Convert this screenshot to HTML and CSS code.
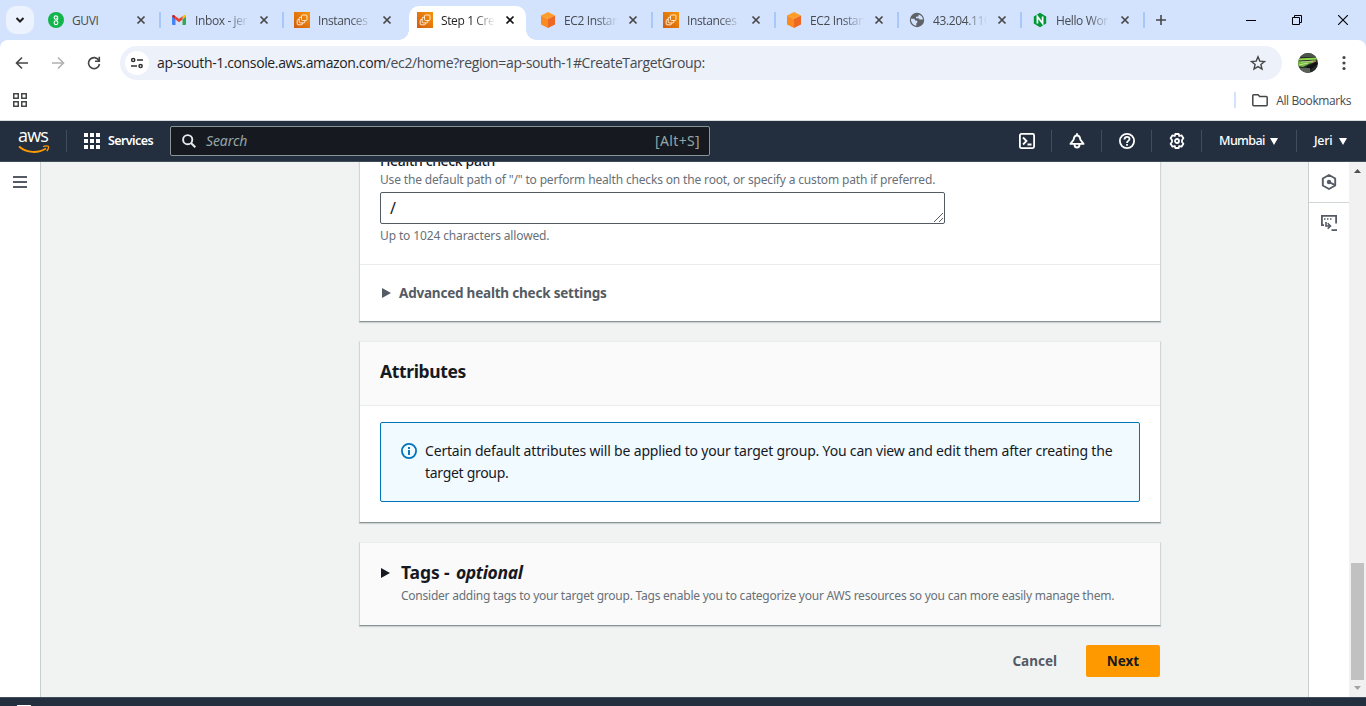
FILE: index.html
```
<!DOCTYPE html>
<html lang="en">
<head>
<meta charset="utf-8">
<title>Step 1 Create target group</title>
<link rel="stylesheet" href="styles.css">
</head>
<body>
<svg class="defs" width="0" height="0">
  <defs>
    <linearGradient id="orange" x1="0" y1="1" x2="1" y2="0"><stop offset="0" stop-color="#d05c10"/><stop offset="1" stop-color="#f79408"/></linearGradient>
    <symbol id="ec2" viewBox="0 0 16 16"><rect width="16" height="16" fill="url(#orange)"/><g fill="none" stroke="#ffe9cf" stroke-width="1"><rect x="7.500" y="3" width="5.500" height="5.500" rx="1"/><path d="M7.500 5.300H6q-.8 0-.8.800v4q0 .8.800.8h4q.8 0 .8-.8V8.500"/><path d="M5.200 7.600H4q-.8 0-.8.800V12q0 .8.800.8h3.600q.8 0 .8-.8v-1.100"/></g></symbol>
    <symbol id="cube" viewBox="0 0 16 16"><path d="M8 0l7 3.500L8 7 1 3.500z" fill="#ff9d2b"/><path d="M1 3.500L8 7v9l-7-3.500z" fill="#f98b20"/><path d="M15 3.500L8 7v9l7-3.500z" fill="#ee6723"/></symbol>
    <symbol id="close" viewBox="0 0 10 10"><path d="M1.500 1.500l7 7M8.500 1.500l-7 7" stroke="currentColor" stroke-width="1.700" fill="none"/></symbol>
  </defs>
</svg>

<header class="tabstrip">
  <div class="tab-search"><svg width="10" height="8" viewBox="0 0 10 8"><path d="M1.500 2L5 5.500 8.500 2" fill="none" stroke="#1f1f1f" stroke-width="2"/></svg></div>
  <div class="tab"><svg class="fav" viewBox="0 0 16 16"><circle cx="8" cy="8" r="8" fill="#12b54a"/><g fill="none" stroke="#fff" stroke-width="1.100"><circle cx="7.800" cy="5.600" r="1.700"/><path d="M9.600 3.900V7.500Q9.400 8.500 8 8.600"/><ellipse cx="8" cy="10.700" rx="1.900" ry="1.900"/></g></svg><span class="title t-guvi">GUVI</span><svg class="x"><use href="#close"/></svg></div>
  <div class="tab"><svg class="fav" viewBox="0 0 16 16"><path d="M1 4.500l3.500 2.600V13H2a1 1 0 0 1-1-1z" fill="#4285f4"/><path d="M15 4.500l-3.500 2.600V13H14a1 1 0 0 0 1-1z" fill="#34a853"/><path d="M11.500 4.200l1.200-.9C13.700 2.600 15 3.200 15 4.500l-3.500 3z" fill="#fbbc04"/><path d="M4.500 4.200L8 6.800l3.500-2.600v3.300L8 10.200 4.500 7.500z" fill="#ea4335"/><path d="M1 4.500c0-1.300 1.300-1.900 2.300-1.200l1.200.9v3.300z" fill="#c5221f"/></svg><span class="title">Inbox - jer</span><svg class="x"><use href="#close"/></svg></div>
  <div class="tab no-sep"><svg class="fav"><use href="#ec2"/></svg><span class="title">Instances</span><svg class="x"><use href="#close"/></svg></div>
  <div class="tab active"><svg class="fav"><use href="#ec2"/></svg><span class="title">Step 1 Cre</span><svg class="x"><use href="#close"/></svg></div>
  <div class="tab"><svg class="fav"><use href="#cube"/></svg><span class="title">EC2 Instan</span><svg class="x"><use href="#close"/></svg></div>
  <div class="tab"><svg class="fav"><use href="#ec2"/></svg><span class="title">Instances</span><svg class="x"><use href="#close"/></svg></div>
  <div class="tab"><svg class="fav"><use href="#cube"/></svg><span class="title">EC2 Instan</span><svg class="x"><use href="#close"/></svg></div>
  <div class="tab"><svg class="fav" viewBox="0 0 16 16"><circle cx="8" cy="8" r="7.200" fill="#5f6368"/><path d="M2 6.800h2.500c1.200 0 1.500.7 1.500 1.700h1.200c.9 0 1.300.8 1.100 1.700-.2.700-1 .8-1 1.500v2C4.200 13.500 1.700 10.500 2 6.800zM9.600 2.400v1.200c0 .8-.6 1.200-1.400 1.200H7v1.400h2.300c1 0 .9 1.400 1.900 1.400h2.700C13.900 5 12 2.900 9.600 2.400z" fill="#d3e3fd"/></svg><span class="title">43.204.110</span><svg class="x"><use href="#close"/></svg></div>
  <div class="tab"><svg class="fav" viewBox="0 0 16 16"><path d="M8 .8l6.200 3.600v7.200L8 15.200l-6.200-3.600V4.400z" fill="#009639"/><path d="M5.400 11.500v-7l5.200 7v-7" fill="none" stroke="#fff" stroke-width="1.700"/></svg><span class="title">Hello Wor</span><svg class="x"><use href="#close"/></svg></div>
  <svg class="new-tab" width="12" height="12" viewBox="0 0 12 12"><path d="M6 1v10M1 6h10" stroke="#444746" stroke-width="1.600"/></svg>
  <div class="window-controls">
    <svg width="10" height="10" viewBox="0 0 10 10"><path d="M0 5.500h10" stroke="#000"/></svg>
    <svg width="10" height="10" viewBox="0 0 10 10"><path d="M.5 2.500h7v7h-7zM2.500 2.500v-2h7v7h-2" fill="none" stroke="#000"/></svg>
    <svg width="10" height="10" viewBox="0 0 10 10"><path d="M0 0l10 10M10 0L0 10" stroke="#000" stroke-width="1.100"/></svg>
  </div>
</header>

<div class="chrome">
  <div class="toolbar">
    <div class="nav-icons">
      <svg width="14" height="14" viewBox="0 0 14 14"><path d="M13 7H2M7 1.500L1.500 7 7 12.500" fill="none" stroke="#444746" stroke-width="1.600"/></svg>
      <svg width="14" height="14" viewBox="0 0 14 14"><path d="M1 7h11M7 1.500L12.500 7 7 12.500" fill="none" stroke="#b0b1b1" stroke-width="1.600"/></svg>
      <svg width="14" height="14" viewBox="0 0 14 14"><path d="M11.800 4.300A5.500 5.500 0 1 0 12.500 8M12.300.8v4.400H8" fill="none" stroke="#444746" stroke-width="1.600"/></svg>
    </div>
    <div class="omnibox">
      <div class="site-info"><svg width="14" height="14" viewBox="0 0 14 14"><g fill="none" stroke="#303134" stroke-width="1.500"><circle cx="3.200" cy="4" r="1.600"/><path d="M7 4h6M1 10h6"/><circle cx="10.600" cy="10" r="1.600"/></g></svg></div>
      <span class="url">ap-south-1.console.aws.amazon.com<span class="path">/ec2/home?region=ap-south-1#CreateTargetGroup:</span></span>
      <svg class="star" width="16" height="16" viewBox="0 0 16 16"><path d="M8 1.800l1.800 4.300 4.700.4-3.600 3 1.100 4.600L8 11.600l-4 2.500 1.100-4.600-3.600-3 4.700-.4z" fill="none" stroke="#444746" stroke-width="1.400"/></svg>
    </div>
    <svg class="avatar" width="20" height="20" viewBox="0 0 20 20"><defs><clipPath id="av"><circle cx="10" cy="10" r="10"/></clipPath></defs><g clip-path="url(#av)"><rect width="20" height="20" fill="#272b29"/><path d="M0 0h20v4H0z" fill="#4a5548"/><path d="M0 5.500l20-1v2L0 7.500z" fill="#8ed84c"/><path d="M0 8l9 1 8-2 1 1-7 3-6 3-5-1z" fill="#75b843"/><path d="M1 12l9-2M3 9l12-1" stroke="#d5efa8" stroke-width=".8"/><path d="M8 14l10-5 2 2-8 6z" fill="#101315"/><path d="M0 15h12v5H0z" fill="#5b625a"/><path d="M13 10l5-2" stroke="#c27d52"/></g></svg>
    <svg class="kebab" width="4" height="16" viewBox="0 0 4 16"><g fill="#444746"><circle cx="2" cy="2.500" r="1.600"/><circle cx="2" cy="8" r="1.600"/><circle cx="2" cy="13.500" r="1.600"/></g></svg>
  </div>
  <div class="bookmarks">
    <svg width="14" height="14" viewBox="0 0 14 14"><path d="M.75.75h4.500v4.500H.75zM8.750.75h4.500v4.500h-4.500zM.75 8.750h4.500v4.500H.75zM8.750 8.750h4.500v4.500h-4.500z" fill="none" stroke="#444746" stroke-width="1.500"/></svg>
    <div class="all-bookmarks"><svg width="16" height="13" viewBox="0 0 16 13"><path d="M.8 10.800V1.800Q.8.800 1.800.8H6l1.700 1.800h6.500q1 0 1 1v7.200q0 1-1 1H1.800q-1 0-1-1z" fill="none" stroke="#444746" stroke-width="1.500"/></svg><span>All Bookmarks</span></div>
  </div>
</div>

<nav class="aws-nav">
  <div class="logo"><span>aws</span><svg width="32" height="9" viewBox="0 0 32 9"><path d="M1 1.500C9 8.300 20 8.500 28 3.500" fill="none" stroke="#ff9900" stroke-width="1.900"/><path d="M25 1.500c2.500-.8 4.500-.8 5.300-.2.600.8-.2 3-1.500 4.900" fill="none" stroke="#ff9900" stroke-width="1.300"/></svg></div>
  <div class="services"><svg width="16" height="16" viewBox="0 0 16 16"><path d="M0 0h4v4H0zM6 0h4v4H6zM12 0h4v4h-4zM0 6h4v4H0zM6 6h4v4H6zM12 6h4v4h-4zM0 12h4v4H0zM6 12h4v4H6zM12 12h4v4h-4z" fill="#fff"/></svg><span>Services</span></div>
  <div class="search"><svg width="14" height="14" viewBox="0 0 14 14"><circle cx="5.700" cy="5.700" r="4.600" fill="none" stroke="#e9ebed" stroke-width="1.900"/><path d="M9 9l4.300 4.300" stroke="#e9ebed" stroke-width="2"/></svg><em>Search</em><span class="key">[Alt+S]</span></div>
  <div class="tools">
    <div class="tool"><svg width="16" height="16" viewBox="0 0 16 16"><g fill="none" stroke="#fff" stroke-width="1.800"><rect x=".9" y=".9" width="14.200" height="14.200" rx="1.500"/><path d="M4 4.500L7.500 8 4 11.500M8.500 11.500h4"/></g></svg></div>
    <div class="tool"><svg width="16" height="16" viewBox="0 0 16 16"><g fill="none" stroke="#fff" stroke-width="1.900"><path d="M8 2.500C5.500 2.500 4.900 4.500 4.700 6.500L1.500 10.900h13L11.300 6.500C11.100 4.500 10.500 2.500 8 2.500zM8 .3v2M5.500 11.500c0 4 5 4 5 0" stroke-linejoin="round"/></g></svg></div>
    <div class="tool"><svg width="16" height="16" viewBox="0 0 16 16"><g fill="none" stroke="#fff" stroke-width="1.800"><circle cx="8" cy="8" r="7.100"/><path d="M5.500 6.500C5.500 3 10.500 3 10.500 6 10.500 8 8 7.800 8 10" /><path d="M8 11v1.800"/></g></svg></div>
    <div class="tool"><svg width="16" height="16" viewBox="0 0 16 16"><g fill="none" stroke="#fff" stroke-width="1.800" stroke-linejoin="round"><path d="M6.300 1h3.400l.5 2 2.300-.7 1.900 3L13 7v2l1.400 1.700-1.900 3-2.300-.7-.5 2H6.300l-.5-2-2.300.7-1.900-3L3 9V7L1.600 5.300l1.900-3 2.300.7z"/><circle cx="8" cy="8" r="2"/></g></svg></div>
    <div class="menu mumbai"><span>Mumbai</span><svg width="8" height="7" viewBox="0 0 8 7"><path d="M0 0h8L4 7z" fill="#fff"/></svg></div>
    <div class="menu jeri"><span>Jeri</span><svg width="8" height="7" viewBox="0 0 8 7"><path d="M0 0h8L4 7z" fill="#fff"/></svg></div>
  </div>
</nav>

<div class="workspace">
  <aside class="left-rail"><svg width="14" height="12" viewBox="0 0 14 12"><path d="M0 1h14M0 6h14M0 11h14" stroke="#545b64" stroke-width="2"/></svg></aside>
  <main class="content">
    <section class="card health">
      <div class="fields">
        <div class="label">Health check path</div>
        <div class="hint h1">Use the default path of "/" to perform health checks on the root, or specify a custom path if preferred.</div>
        <div class="textarea"><span>/</span><svg width="9" height="9" viewBox="0 0 9 9"><path d="M0 9L9 0M5 9l4-4" stroke="#545b64" stroke-width="1"/></svg></div>
        <div class="hint h2">Up to 1024 characters allowed.</div>
      </div>
      <div class="advanced"><svg width="9" height="10" viewBox="0 0 9 10"><path d="M0 0l9 5-9 5z" fill="#545b64"/></svg><span>Advanced health check settings</span></div>
    </section>
    <section class="card attributes">
      <h2>Attributes</h2>
      <div class="alert"><svg width="16" height="16" viewBox="0 0 16 16"><circle cx="8" cy="8" r="7.100" fill="none" stroke="#0073bb" stroke-width="1.800"/><path d="M8 7v5M8 4v2" stroke="#0073bb" stroke-width="1.900"/></svg><p><span class="a1">Certain default attributes will be applied to your target group. You can view and edit them after creating the</span><br><span class="a2">target group.</span></p></div>
    </section>
    <section class="card tags">
      <svg width="9" height="10" viewBox="0 0 9 10"><path d="M0 0l9 5-9 5z" fill="#16191f"/></svg>
      <div><h2>Tags - <em>optional</em></h2><p class="tags-desc">Consider adding tags to your target group. Tags enable you to categorize your AWS resources so you can more easily manage them.</p></div>
    </section>
    <div class="actions"><span class="cancel">Cancel</span><span class="next">Next</span></div>
  </main>
  <aside class="right-rail">
    <div class="rail-item"><svg width="16" height="16" viewBox="0 0 16 16"><g fill="none" stroke="#545b64" stroke-width="1.900"><path d="M8 1l6.200 3.500v7L8 15l-6.200-3.500v-7z" stroke-linejoin="round"/><path d="M8 8l6 3.200"/></g><circle cx="8" cy="8" r="2.200" fill="#545b64"/></svg></div>
    <div class="rail-item terminal"><svg width="16" height="16" viewBox="0 0 16 16"><g fill="none" stroke="#545b64" stroke-width="1.800"><path d="M3 10.100H.9V.9h14.200V8.500"/><path d="M3 4h1.500M6 4h1.500M9 4h1.500M5 7v4M4.100 11h5M6.700 8.200L9.500 11l-2.800 2.800M10.500 15.100H16" stroke-width="1.600"/></g></svg></div>
  </aside>
  <div class="scrollbar"><svg width="7" height="4" viewBox="0 0 7 4"><path d="M0 4l3.500-4L7 4z" fill="#505050"/></svg><div class="thumb"></div><svg width="7" height="4" viewBox="0 0 7 4"><path d="M0 0l3.500 4L7 0z" fill="#a3a3a3"/></svg></div>
</div>
<footer class="footer"><div class="footer-icon"></div></footer>
</body>
</html>
```
FILE: styles.css
```
* { box-sizing: border-box; }
body { margin: 0; width: 1366px; height: 706px; overflow: hidden; display: flex; flex-direction: column; background: #fff; color: #16191f; font-family: "Noto Sans", sans-serif; font-size: 14px; }
svg { display: block; flex: none; }
h2, p { margin: 0; }
span { white-space: nowrap; }
.defs { position: absolute; }

.tabstrip { height: 40px; flex: none; display: flex; background: #d3e3fd; font-family: "Open Sans", sans-serif; }
.tab-search { width: 28px; height: 28px; margin: 6px 6px 0; border-radius: 10px; background: #ecf2fe; display: flex; align-items: center; justify-content: center; }
.tab { width: 123px; flex: none; height: 40px; padding: 0 0 0 8px; display: flex; align-items: center; position: relative; color: #474a50; }
.tab::after { content: ""; position: absolute; right: 2px; top: 12px; width: 2px; height: 16px; background: #a8c7fa; }
.tab.no-sep::after { display: none; }
.fav { width: 16px; height: 16px; }
.title { width: 54px; margin-left: 8px; padding-top: 1px; overflow: hidden; font-size: 12px; line-height: 18px; letter-spacing: -.38px; -webkit-mask-image: linear-gradient(90deg, #000 60%, transparent); mask-image: linear-gradient(90deg, #000 60%, transparent); }
.t-guvi { -webkit-mask-image: none; mask-image: none; letter-spacing: -.4px; }
.x { width: 10px; height: 10px; margin-left: 10px; color: #474747; }
.tab.active { width: 117px; margin: 6px 6px 0 0; height: 34px; padding-bottom: 6px; border-radius: 10px 10px 0 0; background: #fff; color: #1f1f1f; }
.tab.active .x { color: #111; }
.tab.active::before, .tab.active::after { content: ""; position: absolute; top: auto; right: auto; bottom: 0; width: 10px; height: 10px; }
.tab.active::before { left: -10px; background: radial-gradient(circle at 0 0, transparent 9.500px, #fff 10px); }
.tab.active::after { left: 117px; background: radial-gradient(circle at 100% 0, transparent 9.500px, #fff 10px); }
.new-tab { margin: 14px 0 0 8px; }
.window-controls { margin: 15px 18px 0 auto; display: flex; gap: 36px; }

.chrome { height: 81px; flex: none; background: linear-gradient(#d3e3fd 10px, #fff 10px); border-bottom: 1px solid #dadce0; font-family: "Open Sans", sans-serif; }
.toolbar { height: 46px; display: flex; align-items: center; background: #fff; border-radius: 8px 8px 0 0; }
.nav-icons { width: 120px; padding-left: 15px; display: flex; gap: 22px; }
.omnibox { width: 1162px; height: 34px; border-radius: 17px; background: #edf1fa; display: flex; align-items: center; padding: 0 16px 0 5px; }
.site-info { width: 24px; height: 24px; border-radius: 12px; background: #fff; display: flex; align-items: center; justify-content: center; }
.url { margin-left: 8px; padding-bottom: 1px; font-size: 14px; color: #1f1f1f; letter-spacing: -.37px; }
.path { color: #474a4f; }
.star { margin-left: auto; }
.avatar { margin-left: 16px; }
.kebab { margin-left: 24px; }
.bookmarks { height: 34px; padding: 0 15px 6px 13px; display: flex; align-items: center; justify-content: space-between; }
.all-bookmarks { height: 16px; display: flex; align-items: center; gap: 8px; padding-left: 16px; border-left: 2px solid #d3e3fd; font-size: 12px; color: #474a4f; letter-spacing: -.4px; }

.aws-nav { height: 41px; flex: none; display: flex; align-items: center; background: #232f3e; border-bottom: 1px solid #414d5c; color: #fff; }
.logo { width: 67px; height: 22px; padding-left: 18px; border-right: 1px solid #414d5c; }
.logo span { display: block; height: 15px; font: 500 18px/11px "Open Sans", sans-serif; letter-spacing: -.8px; }
.services { width: 103px; display: flex; gap: 8px; padding-left: 17px; align-items: center; font-size: 12.500px; font-weight: 600; letter-spacing: -.6px; }
.services span { padding-bottom: 1px; }
.search { width: 540px; height: 30px; border: 1px solid #879596; border-radius: 2px; background: #161a20; display: flex; align-items: center; padding: 0 9px 0 11px; font-size: 14px; color: #95a5a6; }
.search em { margin-left: 10px; padding-bottom: 1px; letter-spacing: -.1px; }
.key { margin-left: auto; padding-bottom: 1px; letter-spacing: .35px; }
.tools { margin-left: auto; display: flex; height: 22px; align-items: center; font-size: 12.500px; font-weight: 500; letter-spacing: -.6px; }
.tool { width: 50px; height: 22px; display: flex; align-items: center; justify-content: center; border-right: 1px solid #414d5c; }
.menu { height: 22px; display: flex; align-items: center; justify-content: space-between; padding-left: 17px; }
.menu span { padding-bottom: 1px; }
.mumbai { width: 95px; padding-right: 18px; border-right: 1px solid #414d5c; }
.jeri { width: 69px; padding-right: 19px; letter-spacing: -.3px; }

.workspace { height: 535px; flex: none; display: flex; background: #f1f3f3; overflow: hidden; }
.left-rail { width: 41px; padding: 14px 0 0 13px; background: #fff; border-right: 1px solid #c8cfcf; }
.content { width: 1267px; padding-left: 318px; }
.card { width: 802px; background: #fff; border: 1px solid #d0d5d6; border-top-color: #eaeded; border-bottom-color: #879596; box-shadow: 0 1px 1px rgba(0,28,36,.15); margin-bottom: 19px; }
.card.health { height: 160px; border-top: 0; }
.fields { display: flow-root; height: 103px; padding-left: 20px; border-bottom: 1px solid #eaeded; }
.label { height: 20px; margin-top: -11px; line-height: 20px; font-weight: 500; letter-spacing: -.35px; }
.hint, .tags-desc { color: #687078; font-size: 12px; line-height: 18px; white-space: nowrap; }
.h1 { letter-spacing: -.16px; }
.h2 { letter-spacing: -.13px; }
.textarea { width: 565px; height: 32px; margin: 3px 0; border: 1px solid #545b64; border-radius: 2px; padding: 0 1px 1px 9px; display: flex; align-items: center; justify-content: space-between; }
.textarea span { font-size: 16px; line-height: 22px; }
.textarea svg { align-self: flex-end; }
.advanced { height: 56px; display: flex; align-items: center; gap: 8px; padding-left: 22px; font-size: 13.500px; letter-spacing: -.21px; font-weight: 700; color: #545b64; }
.attributes { height: 182px; }
h2 { font-size: 17.500px; letter-spacing: -.37px; line-height: 22px; font-weight: 700; }
.attributes h2 { height: 64px; padding: 18px 20px; background: #fafafa; border-bottom: 1px solid #eaeded; }
.alert { width: 760px; height: 80px; margin: 16px 20px; border: 1px solid #0073bb; border-radius: 2px; background: #f1faff; display: flex; gap: 8px; padding: 17px 20px; line-height: 22px; }
.a1 { letter-spacing: -.18px; }
.a2 { letter-spacing: -.3px; }
.alert svg { margin-top: 3px; }
.tags { height: 84px; background: #fafafa; padding: 18px 21px; display: flex; gap: 11px; }
.tags h2 { letter-spacing: -.12px; }
.tags svg { margin-top: 7px; }
.tags em { letter-spacing: -.35px; margin-left: 2px; }
.tags-desc { padding-top: 4px; letter-spacing: -.237px; }
.actions { width: 801px; display: flex; align-items: center; justify-content: flex-end; font-size: 13.500px; font-weight: 700; }
.cancel { margin-right: 29px; color: #545b64; }
.next { width: 74px; height: 32px; line-height: 32px; text-align: center; border-radius: 2px; background: #ff9900; color: #16191f; }
.right-rail { width: 41px; background: #fff; border-left: 1px solid #c8cfcf; }
.rail-item { height: 41px; display: flex; align-items: center; justify-content: center; }
.rail-item:first-child { border-bottom: 1px solid #d0d5d6; }
.terminal { height: 40px; }
.scrollbar { width: 17px; background: #f1f1f1; display: flex; flex-direction: column; align-items: center; padding: 7px 0; }
.thumb { width: 13px; height: 117px; margin: 390px 0 6px; background: #c1c1c1; }
.footer { height: 9px; flex: none; background: #232f3e; border-top: 1px solid #414d5c; padding: 7px 0 0 17px; }
.footer-icon { width: 14px; height: 1px; background: #fff; }
```
